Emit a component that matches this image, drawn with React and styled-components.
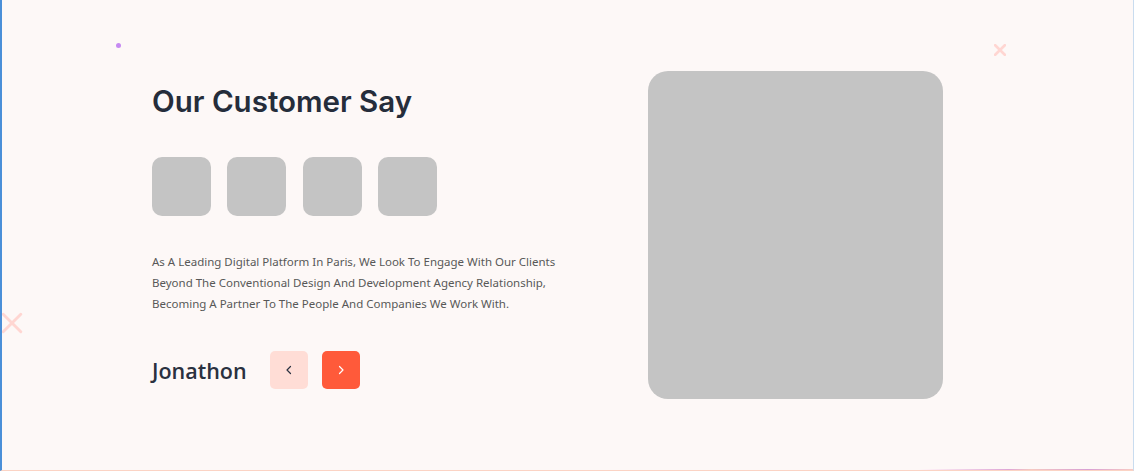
import React from 'react';
import styled, { createGlobalStyle } from 'styled-components';

const GlobalStyle = createGlobalStyle`
  html, body {
    margin: 0;
    padding: 0;
    background: #fdf8f7;
  }
`;

const Page = styled.section`
  position: relative;
  box-sizing: border-box;
  width: 1134px;
  height: 471px;
  overflow: hidden;
  background: #fdf8f7;
  border-left: 2px solid #4a8fd8;
  border-right: 1px solid #c9dcef;
  border-bottom: 1px solid #fbd3c4;
  display: flex;
  align-items: flex-start;
  padding: 71px 0 0 150px;
`;

const BottomGlow = styled.div`
  position: absolute;
  left: 0;
  right: 0;
  bottom: 0;
  height: 1px;
  background: linear-gradient(
    90deg,
    transparent 0%,
    transparent 81%,
    #fdeef5 82%,
    #dfa6d6 89%,
    #f5c9c2 91%,
    #d9a0d4 96%,
    #f8cbc4 100%
  );
`;

const Dot = styled.span`
  position: absolute;
  left: 114px;
  top: 43px;
  width: 5px;
  height: 5px;
  border-radius: 50%;
  background: #c68af2;
`;

const Cross = styled.svg`
  position: absolute;
  left: ${p => p.$x}px;
  top: ${p => p.$y}px;
`;

const Left = styled.div`
  width: 440px;
  display: flex;
  flex-direction: column;
`;

const Title = styled.h2`
  margin: 12px 0 0;
  font-family: Inter, "Noto Sans", sans-serif;
  font-weight: 600;
  font-size: 29.5px;
  line-height: 36px;
  letter-spacing: 0;
  color: #252d3b;
`;

const Avatars = styled.div`
  display: flex;
  gap: 16.3px;
  margin-top: 38px;
`;

const Avatar = styled.div`
  width: 59px;
  height: 59px;
  border-radius: 10px;
  background: #c4c4c4;
`;

const Quote = styled.p`
  margin: 35px 0 0;
  font-family: "Noto Sans", sans-serif;
  font-size: 11.5px;
  line-height: 21px;
  color: #585858;
  white-space: nowrap;
`;

const Footer = styled.div`
  display: flex;
  align-items: center;
  margin-top: 37px;
`;

const Name = styled.div`
  font-family: "Open Sans", sans-serif;
  font-weight: 600;
  font-size: 21.5px;
  color: #2a3140;
  margin-right: 23px;
`;

const NavButton = styled.button`
  width: 38px;
  height: 38px;
  border: none;
  border-radius: 5px;
  padding: 0;
  margin-right: 14px;
  display: flex;
  align-items: center;
  justify-content: center;
  background: ${p => (p.$active ? '#ff5a3a' : '#ffddd6')};
  color: ${p => (p.$active ? '#ffffff' : '#2a3140')};
  cursor: pointer;
`;

const Photo = styled.div`
  width: 295px;
  height: 328px;
  margin-left: 56px;
  border-radius: 20px;
  background: #c4c4c4;
`;

const Chevron = ({ dir }) => (
  <svg width="10" height="10" viewBox="0 0 10 10" fill="none">
    <path
      d={dir === 'left' ? 'M6.5 1.5 L3 5 L6.5 8.5' : 'M3.5 1.5 L7 5 L3.5 8.5'}
      stroke="currentColor"
      strokeWidth="1.2"
      strokeLinecap="round"
      strokeLinejoin="round"
    />
  </svg>
);

const CrossMark = ({ x, y, size, stroke }) => (
  <Cross $x={x} $y={y} width={size} height={size} viewBox="0 0 10 10">
    <path d="M1 1 L9 9 M9 1 L1 9" stroke="#ffd6d2" strokeWidth={stroke} strokeLinecap="round" />
  </Cross>
);

export default function App() {
  return (
    <>
      <GlobalStyle />
      <Page>
        <Dot />
        <CrossMark x={992} y={44} size={12} stroke={2.2} />
        <CrossMark x={-1} y={312} size={22} stroke={1.3} />
        <Left>
          <Title>Our Customer Say</Title>
          <Avatars>
            <Avatar />
            <Avatar />
            <Avatar />
            <Avatar />
          </Avatars>
          <Quote>
            As A Leading Digital Platform In Paris, We Look To Engage With Our Clients
            <br />
            Beyond The Conventional Design And Development Agency Relationship,
            <br />
            Becoming A Partner To The People And Companies We Work With.
          </Quote>
          <Footer>
            <Name>Jonathon</Name>
            <NavButton aria-label="Previous">
              <Chevron dir="left" />
            </NavButton>
            <NavButton $active aria-label="Next">
              <Chevron dir="right" />
            </NavButton>
          </Footer>
        </Left>
        <Photo />
        <BottomGlow />
      </Page>
    </>
  );
}
